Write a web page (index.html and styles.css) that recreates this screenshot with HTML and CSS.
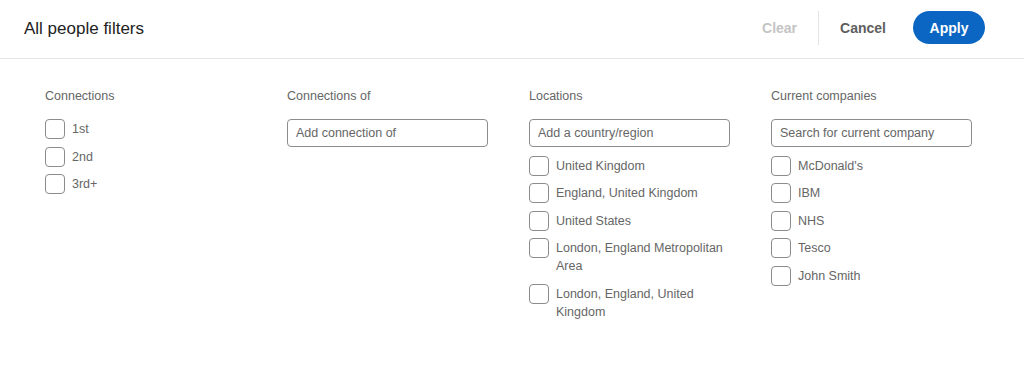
FILE: index.html
```html
<!DOCTYPE html>
<html lang="en">
<head>
	<meta charset="UTF-8">
	<title>All people filters</title>
	<link rel="stylesheet" href="styles.css">
</head>
<body>
	<div class="header">
		<h1 class="title">All people filters</h1>
		<div class="actions">
			<button class="btn-clear">Clear</button>
			<span class="divider"></span>
			<button class="btn-cancel">Cancel</button>
			<button class="btn-apply">Apply</button>
		</div>
	</div>
	<div class="filters">
		<div class="col">
			<div class="col-title">Connections</div>
			<ul class="opts">
				<li><span class="box"></span><span class="opt-text">1st</span></li>
				<li><span class="box"></span><span class="opt-text">2nd</span></li>
				<li><span class="box"></span><span class="opt-text">3rd+</span></li>
			</ul>
		</div>
		<div class="col">
			<div class="col-title">Connections of</div>
			<input class="search" type="text" placeholder="Add connection of">
		</div>
		<div class="col">
			<div class="col-title">Locations</div>
			<input class="search" type="text" placeholder="Add a country/region">
			<ul class="opts">
				<li><span class="box"></span><span class="opt-text">United Kingdom</span></li>
				<li><span class="box"></span><span class="opt-text">England, United Kingdom</span></li>
				<li><span class="box"></span><span class="opt-text">United States</span></li>
				<li><span class="box"></span><span class="opt-text">London, England Metropolitan Area</span></li>
				<li><span class="box"></span><span class="opt-text">London, England, United Kingdom</span></li>
			</ul>
		</div>
		<div class="col">
			<div class="col-title">Current companies</div>
			<input class="search" type="text" placeholder="Search for current company">
			<ul class="opts">
				<li><span class="box"></span><span class="opt-text">McDonald's</span></li>
				<li><span class="box"></span><span class="opt-text">IBM</span></li>
				<li><span class="box"></span><span class="opt-text">NHS</span></li>
				<li><span class="box"></span><span class="opt-text">Tesco</span></li>
				<li><span class="box"></span><span class="opt-text">John Smith</span></li>
			</ul>
		</div>
	</div>
</body>
</html>
```

FILE: styles.css
```css
body{
	margin:0;
	padding:0;
	background:#fff;
	font-family:"Liberation Sans", Arial, sans-serif;
	color:#666;
}
.header{
	height:58px;
	border-bottom:1px solid #e6e6e6;
	display:flex;
	align-items:center;
	justify-content:space-between;
	padding:0 39px 0 24px;
}
.title{
	margin:0;
	font-size:17px;
	font-weight:normal;
	color:#222;
}
.actions{
	display:flex;
	align-items:center;
	margin-top:-3px;
}
.actions button{
	font-family:inherit;
	font-size:14px;
	font-weight:bold;
	border:0;
	background:none;
	padding:0;
	cursor:pointer;
}
.btn-clear{
	color:#c4c4c4;
}
.divider{
	width:1px;
	height:34px;
	background:#e3e3e3;
	margin:0 21px;
}
.btn-cancel{
	color:#5e5e5e;
}
.actions .btn-apply{
	margin-left:27px;
	width:72px;
	height:33px;
	border-radius:17px;
	background:#0a66c2;
	color:#fff;
}
/* filter columns */
.filters{
	display:grid;
	grid-template-columns:repeat(4, 210px);
	column-gap:32px;
	padding:28px 0 0 45px;
}
.col-title{
	font-size:12.5px;
	line-height:18px;
	margin-bottom:14px;
	color:#666;
}
.search{
	box-sizing:border-box;
	display:block;
	width:201px;
	height:28px;
	border:1px solid #8c8c8c;
	border-radius:4px;
	padding:0 8px;
	font-family:inherit;
	font-size:12.5px;
	color:#333;
	margin:1px 0 8.5px;
}
.search::placeholder{
	color:#666;
}
.opts{
	list-style:none;
	margin:0;
	padding:0;
	display:flex;
	flex-direction:column;
	gap:7.5px;
}
.opts li{
	display:flex;
	align-items:flex-start;
}
.box{
	box-sizing:border-box;
	flex:none;
	width:20px;
	height:20px;
	border:1px solid #8c8c8c;
	border-radius:4px;
	margin-right:7px;
}
.opt-text{
	font-size:12.5px;
	line-height:18px;
	padding:1px 0;
	color:#666;
}
```
